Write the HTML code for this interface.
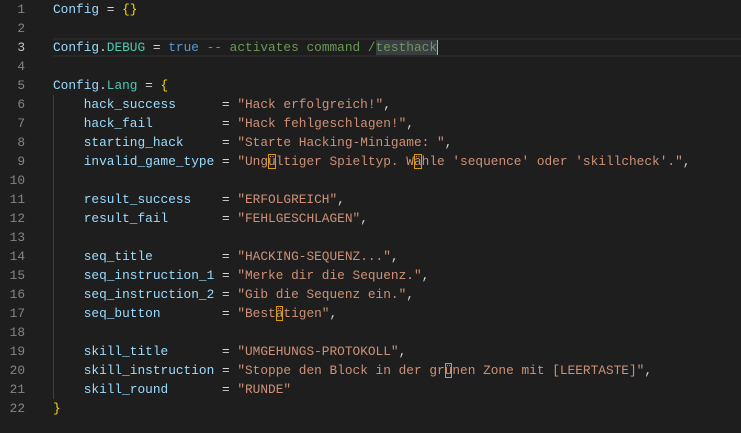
<!DOCTYPE html>
<html><head><meta charset="utf-8"><style>
html,body{margin:0;padding:0;background:#1e1e1e;width:741px;height:433px;overflow:hidden}
.ed{position:relative;font-family:"Liberation Mono","DejaVu Sans Mono",monospace;font-size:12.8px;}
.l{position:absolute;left:0;height:19px;line-height:19px;width:741px;white-space:pre}
.n{position:absolute;left:0;width:25px;text-align:right;color:#858585}
.c{position:absolute;left:53px;color:#d4d4d4}
.cur{box-sizing:border-box;border-top:2px solid #282828;border-bottom:2px solid #282828;left:53px;width:688px;height:19px;position:absolute}
.v{color:#9cdcfe}.p{color:#4ec9b0}.k{color:#569cd6}.m{color:#6a9955}.s{color:#ce9178}.b{color:#ffd700}
.sel{background:#3a3d41}
.u{outline:1px solid #d7a000;outline-offset:-1px}
.g{position:absolute;left:53px;top:95px;width:1px;height:304px;background:#404040}
</style></head><body><div class="ed">
<div class="cur" style="top:38px"></div>
<div class="g"></div>
<div class="l" style="top:0"><span class="n">1</span><span class="c"><span class="v">Config</span> = <span class="b">{}</span></span></div>
<div class="l" style="top:19px"><span class="n">2</span></div>
<div class="l" style="top:38px"><span class="n" style="color:#c6c6c6">3</span><span class="c"><span class="v">Config</span>.<span class="p">DEBUG</span> = <span class="k">true</span> <span class="m">-- activates command /<span class="sel">testhack</span></span><span style="border-left:1px solid #aeafad"></span></span></div>
<div class="l" style="top:57px"><span class="n">4</span></div>
<div class="l" style="top:76px"><span class="n">5</span><span class="c"><span class="v">Config</span>.<span class="p">Lang</span> = <span class="b">{</span></span></div>
<div class="l" style="top:95px"><span class="n">6</span><span class="c">    <span class="v">hack_success</span>      = <span class="s">"Hack erfolgreich!"</span>,</span></div>
<div class="l" style="top:114px"><span class="n">7</span><span class="c">    <span class="v">hack_fail</span>         = <span class="s">"Hack fehlgeschlagen!"</span>,</span></div>
<div class="l" style="top:133px"><span class="n">8</span><span class="c">    <span class="v">starting_hack</span>     = <span class="s">"Starte Hacking-Minigame: "</span>,</span></div>
<div class="l" style="top:152px"><span class="n">9</span><span class="c">    <span class="v">invalid_game_type</span> = <span class="s">"Ung<span class="u">ü</span>ltiger Spieltyp. W<span class="u">ä</span>hle 'sequence' oder 'skillcheck'."</span>,</span></div>
<div class="l" style="top:171px"><span class="n">10</span></div>
<div class="l" style="top:190px"><span class="n">11</span><span class="c">    <span class="v">result_success</span>    = <span class="s">"ERFOLGREICH"</span>,</span></div>
<div class="l" style="top:209px"><span class="n">12</span><span class="c">    <span class="v">result_fail</span>       = <span class="s">"FEHLGESCHLAGEN"</span>,</span></div>
<div class="l" style="top:228px"><span class="n">13</span></div>
<div class="l" style="top:247px"><span class="n">14</span><span class="c">    <span class="v">seq_title</span>         = <span class="s">"HACKING-SEQUENZ..."</span>,</span></div>
<div class="l" style="top:266px"><span class="n">15</span><span class="c">    <span class="v">seq_instruction_1</span> = <span class="s">"Merke dir die Sequenz."</span>,</span></div>
<div class="l" style="top:285px"><span class="n">16</span><span class="c">    <span class="v">seq_instruction_2</span> = <span class="s">"Gib die Sequenz ein."</span>,</span></div>
<div class="l" style="top:304px"><span class="n">17</span><span class="c">    <span class="v">seq_button</span>        = <span class="s">"Best<span class="u">ä</span>tigen"</span>,</span></div>
<div class="l" style="top:323px"><span class="n">18</span></div>
<div class="l" style="top:342px"><span class="n">19</span><span class="c">    <span class="v">skill_title</span>       = <span class="s">"UMGEHUNGS-PROTOKOLL"</span>,</span></div>
<div class="l" style="top:361px"><span class="n">20</span><span class="c">    <span class="v">skill_instruction</span> = <span class="s">"Stoppe den Block in der gr<span class="u">ü</span>nen Zone mit [LEERTASTE]"</span>,</span></div>
<div class="l" style="top:380px"><span class="n">21</span><span class="c">    <span class="v">skill_round</span>       = <span class="s">"RUNDE"</span></span></div>
<div class="l" style="top:399px"><span class="n">22</span><span class="c"><span class="b">}</span></span></div>
</div></body></html>
